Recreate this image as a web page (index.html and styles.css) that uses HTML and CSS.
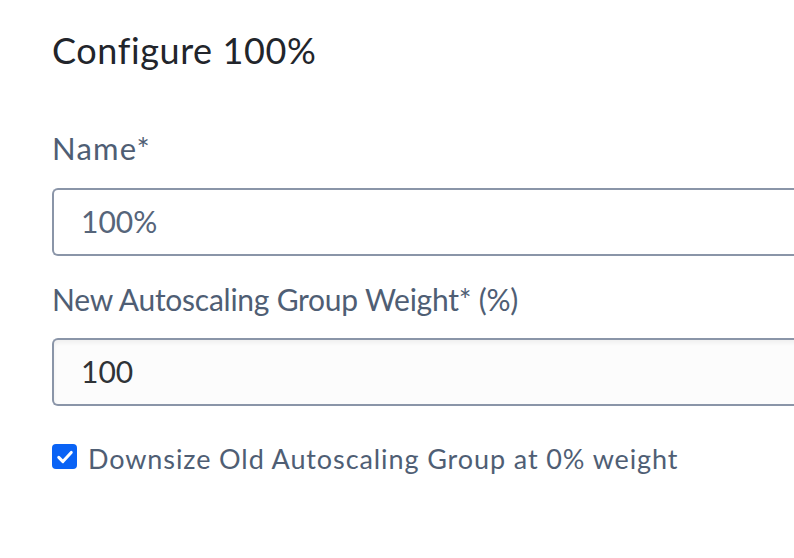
FILE: index.html
```html
<!DOCTYPE html>
<html>
<head>
<meta charset="utf-8">
<link rel="stylesheet" href="styles.css">
</head>
<body>
<div class="panel">
  <h1 class="title">Configure 100%</h1>
  <div class="field name-field">
    <label class="label">Name*</label>
    <div class="input">100%</div>
  </div>
  <div class="field weight-field">
    <label class="label small">New Autoscaling Group Weight* (%)</label>
    <div class="input filled">100</div>
  </div>
  <div class="check-row">
    <span class="checkbox">
      <svg viewBox="0 0 24 24" width="20" height="20"><path d="M4.5 12.5l5 5 10-11" fill="none" stroke="#fff" stroke-width="3.6" stroke-linecap="round" stroke-linejoin="round"/></svg>
    </span>
    <span class="check-label">Downsize Old Autoscaling Group at 0% weight</span>
  </div>
</div>
</body>
</html>
```
FILE: styles.css
```css
html, body {
  margin: 0;
  padding: 0;
  background: #ffffff;
  overflow: hidden;
}
body {
  font-family: Lato, "Open Sans", sans-serif;
  width: 794px;
  height: 558px;
}
.panel {
  padding: 26px 0 30px 52px;
  width: 742px;
  overflow: hidden;
}
.title {
  margin: 0;
  font-size: 36px;
  font-weight: 400;
  color: #22252b;
  line-height: 48px;
  letter-spacing: 0.6px;
}
.field {
  display: flex;
  flex-direction: column;
}
.name-field {
  margin-top: 56px;
}
.label {
  font-size: 31px;
  color: #4f5e74;
  line-height: 36px;
  letter-spacing: 1.2px;
}
.label.small {
  font-size: 30px;
  line-height: 32px;
  letter-spacing: -0.25px;
}
.name-field .input {
  margin-top: 22px;
}
.weight-field {
  margin-top: 27px;
}
.weight-field .input {
  margin-top: 23px;
}
.input {
  box-sizing: border-box;
  height: 68px;
  width: 760px;
  border: 2px solid #8a95a8;
  border-right: none;
  border-radius: 6px 0 0 6px;
  padding: 0 0 3px 27px;
  display: flex;
  align-items: center;
  font-size: 30px;
  color: #56657a;
}
.input.filled {
  color: #2f3337;
  background: #fcfcfc;
  box-shadow: inset 0 3px 4px rgba(0,0,0,0.05);
}
.check-row {
  margin-top: 38px;
  display: flex;
  align-items: flex-start;
  gap: 11px;
}
.checkbox {
  flex: none;
  width: 25px;
  height: 25px;
  border-radius: 4px;
  background: #0a63f5;
  display: flex;
  align-items: center;
  justify-content: center;
}
.check-label {
  font-size: 27px;
  line-height: 25px;
  padding-top: 2px;
  letter-spacing: 0.9px;
  color: #4f5e74;
  white-space: nowrap;
}
```
